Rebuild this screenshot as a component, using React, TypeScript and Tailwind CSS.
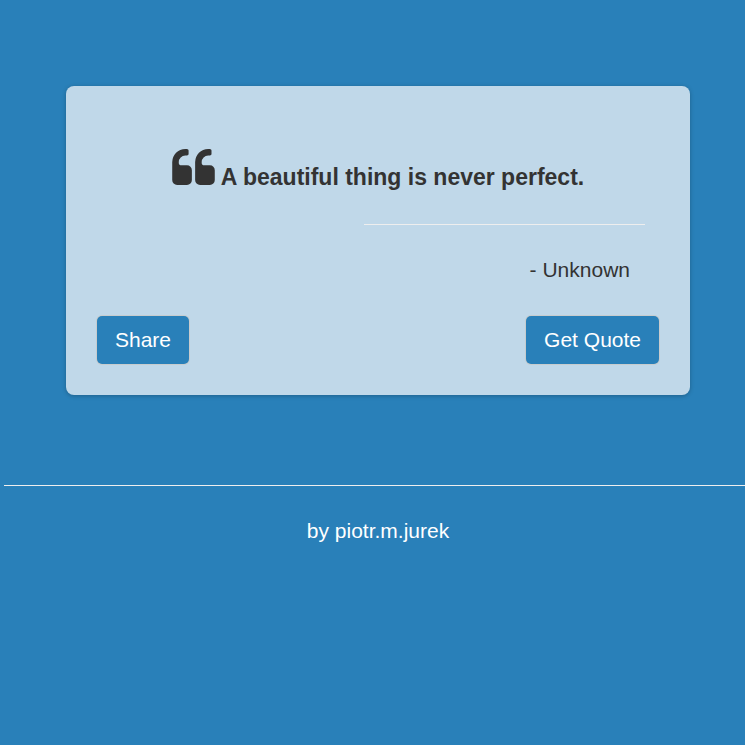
import React from "react";

const quoteMark =
  "M768 960v384q0 80-56 136t-136 56h-384q-80 0-136-56t-56-136v-704q0-104 40.5-198.5t109.5-163.5 163.5-109.5 198.5-40.5h64q26 0 45 19t19 45v128q0 26-19 45t-45 19h-64q-106 0-181 75t-75 181v32q0 40 28 68t68 28h224q80 0 136 56t56 136z";

function QuoteIcon() {
  return (
    <svg
      viewBox="0 128 1664 1408"
      className="h-9 w-[43px] shrink-0 fill-current"
      aria-hidden="true"
    >
      <path d={quoteMark} />
      <path d={quoteMark} transform="translate(896 0)" />
    </svg>
  );
}

function Button({ children }: { children: React.ReactNode }) {
  return (
    <button
      type="button"
      className="h-12 rounded-[5px] bg-[#2980b9] px-[18px] text-white shadow-[0_0_0_1px_rgba(204,196,188,0.6)]"
    >
      {children}
    </button>
  );
}

export default function App() {
  return (
    <div className="min-h-screen bg-[#2980b9] pt-[86px] pl-1 font-['Liberation_Sans',Arial,sans-serif] text-[21px] leading-[30px] text-[#333333]">
      <main className="mr-[55px] ml-[62px] rounded-lg bg-[#c0d8e9] px-[31px] pt-[63px] pb-[31px] shadow-[0_1px_4px_rgba(0,0,0,0.25)]">
        <blockquote className="flex items-baseline justify-center gap-[6px]">
          <QuoteIcon />
          <p className="text-[23px] font-bold">A beautiful thing is never perfect.</p>
        </blockquote>
        <hr className="mt-8 mr-[14px] ml-auto w-1/2 border-[#eeeeee]" />
        <p className="mt-[30px] mr-[29px] text-right">- Unknown</p>
        <div className="mt-[31px] flex justify-between">
          <Button>Share</Button>
          <Button>Get Quote</Button>
        </div>
      </main>
      <footer className="mt-[90px] border-t border-[#eeeeee] pt-[30px] pl-[7px] text-center text-white">
        <p>by piotr.m.jurek</p>
      </footer>
    </div>
  );
}
